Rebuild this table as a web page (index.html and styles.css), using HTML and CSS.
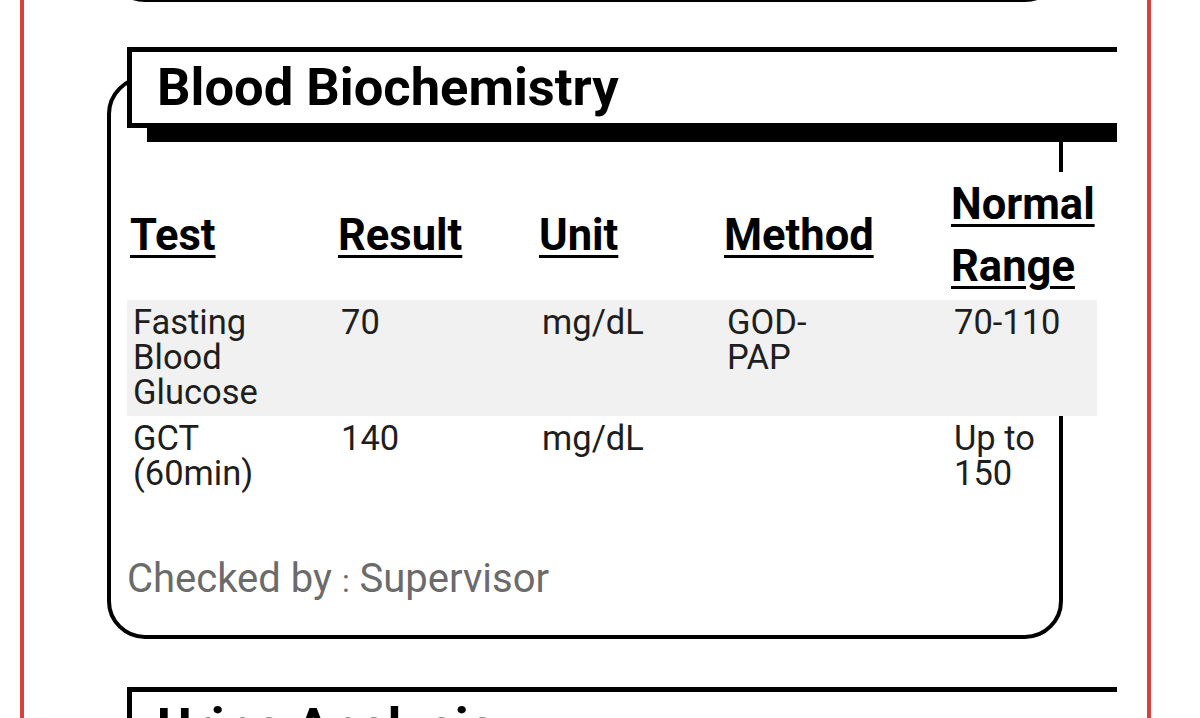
FILE: index.html
```html
<!DOCTYPE html>
<html lang="en">
<head>
<meta charset="utf-8">
<title>Lab Report</title>
<link rel="stylesheet" href="styles.css">
</head>
<body>
<div class="frame">
  <div class="page">
    <div class="card stub"></div>

    <section class="card">
      <h2 class="sec-title">Blood Biochemistry</h2>
      <table class="results">
        <colgroup>
          <col class="c-test">
          <col class="c-result">
          <col class="c-unit">
          <col class="c-method">
          <col class="c-range">
        </colgroup>
        <thead>
          <tr>
            <th>Test</th>
            <th>Result</th>
            <th>Unit</th>
            <th>Method</th>
            <th>Normal Range</th>
          </tr>
        </thead>
        <tbody>
          <tr class="shaded">
            <td>Fasting Blood Glucose</td>
            <td>70</td>
            <td>mg/dL</td>
            <td>GOD-PAP</td>
            <td>70-110</td>
          </tr>
          <tr>
            <td>GCT (60min)</td>
            <td>140</td>
            <td>mg/dL</td>
            <td></td>
            <td>Up to 150</td>
          </tr>
        </tbody>
      </table>
      <p class="checked">Checked by <span class="colon">:</span> Supervisor</p>
    </section>

    <section class="card">
      <h2 class="sec-title">Urine Analysis</h2>
    </section>
  </div>
</div>
</body>
</html>
```

FILE: styles.css
```css
html, body {
  margin: 0;
  padding: 0;
  background: #ffffff;
  overflow: hidden;
}

body {
  font-family: Roboto, "Liberation Sans", Arial, sans-serif;
  color: #1e1e1e;
}

.frame {
  margin-left: 20px;
  width: 1123px;
  min-height: 718px;
  border-left: 4px solid #d8413c;
  border-right: 4px solid #d8413c;
}

.page {
  width: 1010px;
  padding-left: 83px;
  overflow: hidden;
  min-height: 718px;
}

.card {
  box-sizing: border-box;
  width: 956px;
  border: 4px solid #000;
  border-radius: 38px;
  background: #fff;
  padding: 0 16px 30px 16px;
  margin-bottom: 77px;
}

.stub {
  height: 100px;
  margin-top: -98px;
  margin-bottom: 74px;
  padding: 0;
}

.sec-title {
  box-sizing: border-box;
  width: 1010px;
  height: 81px;
  margin: -33px 0 0 0;
  padding: 0 0 0 25px;
  border: 5px solid #000;
  background: #fff;
  box-shadow: 20px 14px 0 #000;
  font-size: 52.5px;
  font-weight: 700;
  line-height: 70px;
  color: #000;
  white-space: nowrap;
}

.results {
  table-layout: fixed;
  width: 970px;
  border-collapse: collapse;
  margin-top: 44px;
}

.c-test { width: 208px; }
.c-result { width: 201px; }
.c-unit { width: 185px; }
.c-method { width: 227px; }
.c-range { width: 149px; }

.results th {
  background: #fff;
  text-align: left;
  padding: 2px 3px;
  font-size: 43.5px;
  font-weight: 700;
  line-height: 62px;
  color: #000;
  text-decoration: underline;
  text-decoration-thickness: 3px;
  text-underline-offset: 5px;
  vertical-align: middle;
  white-space: normal;
}

.results td {
  padding: 5px 6px 6px 6px;
  font-size: 34.5px;
  line-height: 35px;
  vertical-align: top;
  color: #1e1e1e;
}

.results td:nth-child(1) { padding-right: 40px; }
.results td:nth-child(4) { padding-right: 100px; }
.results td:nth-child(5) { padding-right: 22px; }

.results tr.shaded td {
  background: #f1f1f1;
}

.checked {
  margin: 58px 0 0 0;
  font-size: 40px;
  line-height: 47px;
  color: #6b6b6b;
}

.colon {
  font-size: 32px;
}
```
